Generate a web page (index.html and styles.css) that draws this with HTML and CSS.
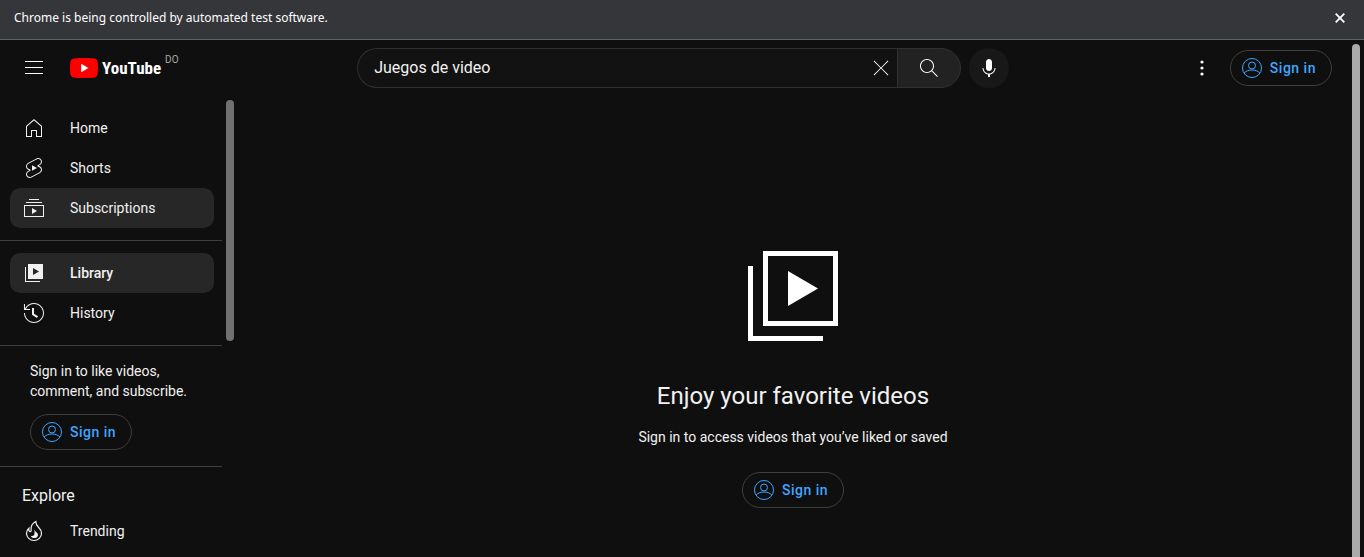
FILE: index.html
```html
<!DOCTYPE html>
<html lang="en">
<head>
<meta charset="utf-8">
<title>Library - YouTube</title>
<link rel="stylesheet" href="styles.css">
</head>
<body>
<svg class="sprite" aria-hidden="true">
  <symbol id="person" viewBox="0 0 24 24"><g fill="none" stroke="currentColor" stroke-width="1"><circle cx="12" cy="12" r="9.5"/><circle cx="12" cy="9.5" r="3.5"/><path d="M4 17.2C5.6 15.2 8.6 14 12 14s6.400 1.200 8 3.200"/></g></symbol>
</svg>
<div class="infobar">
  <span>Chrome is being controlled by automated test software.</span>
  <button class="infobar-close" aria-label="Close"><svg viewBox="0 0 10 10"><path d="M.7.7l8.600 8.600M9.300.7L.7 9.300" fill="none" stroke="currentColor" stroke-width="1.800"/></svg></button>
</div>
<div class="app">
  <div class="page">
    <header class="masthead">
      <div class="start">
        <button class="plain" aria-label="Guide"><svg class="icon" viewBox="0 0 24 24"><path d="M21 6H3V5h18v1zm0 5H3v1h18v-1zm0 6H3v1h18v-1z"/></svg></button>
        <a class="logo" href="#"><svg class="logo-mark" viewBox="0 0 28 20"><path fill="#f00" d="M27.400 3.100A3.500 3.500 0 0 0 24.900.6C22.700 0 14 0 14 0S5.300 0 3.100.6A3.500 3.500 0 0 0 .6 3.100C0 5.300 0 10 0 10s0 4.700.6 6.900a3.500 3.500 0 0 0 2.500 2.500C5.300 20 14 20 14 20s8.700 0 10.900-.6a3.500 3.500 0 0 0 2.500-2.500C28 14.700 28 10 28 10s0-4.700-.6-6.900z"/><path fill="#fff" d="M11.200 14.300V5.700l7.300 4.300z"/></svg><span class="wordmark">YouTube</span><span class="country">DO</span></a>
      </div>
      <form class="center">
        <div class="field">
          <input type="text" aria-label="Search" value="Juegos de video">
          <button type="button" class="plain" aria-label="Clear"><svg class="icon-small" viewBox="0 0 24 24"><path d="m12.710 12 8.150 8.150-.71.71L12 12.710l-8.150 8.150-.71-.71L11.290 12 3.150 3.850l.71-.71L12 11.290l8.150-8.150.71.71z"/></svg></button>
        </div>
        <button type="button" class="search" aria-label="Search"><svg class="icon" viewBox="0 0 24 24"><path d="m20.870 20.170-5.590-5.590C16.350 13.350 17 11.750 17 10c0-3.870-3.130-7-7-7s-7 3.130-7 7 3.130 7 7 7c1.750 0 3.350-.65 4.580-1.710l5.590 5.590.7-.71zM10 16c-3.310 0-6-2.690-6-6s2.690-6 6-6 6 2.690 6 6-2.690 6-6 6z"/></svg></button>
        <button type="button" class="mic" aria-label="Search with your voice"><svg class="icon" viewBox="0 0 24 24"><path d="M12 3c-1.660 0-3 1.370-3 3.070v5.860C9 13.630 10.340 15 12 15s3-1.370 3-3.070V6.070C15 4.370 13.660 3 12 3zm6.500 9h-1c0 3.030-2.470 5.500-5.500 5.500S6.500 15.030 6.500 12h-1c0 3.240 2.390 5.930 5.500 6.410V21h2v-2.590c3.110-.48 5.500-3.170 5.500-6.410z"/></svg></button>
      </form>
      <div class="end">
        <button class="plain" aria-label="Settings"><svg class="icon" viewBox="0 0 24 24"><circle cx="12" cy="6" r="1.600"/><circle cx="12" cy="12" r="1.600"/><circle cx="12" cy="18" r="1.600"/></svg></button>
        <a class="signin" href="#"><svg class="icon"><use href="#person"/></svg>Sign in</a>
      </div>
    </header>
    <div class="columns">
      <div class="guide">
        <nav class="guide-list">
          <section>
            <a class="entry" href="#"><svg class="icon" viewBox="0 0 24 24"><path d="m12 4.440 7 6.090V20h-4v-6H9v6H5v-9.470l7-6.090m0-1.320-8 6.960V21h6v-6h4v6h6V10.080l-8-6.960z"/></svg>Home</a>
            <a class="entry" href="#"><svg class="icon" viewBox="0 0 24 24"><path d="M10 14.650v-5.300L15 12l-5 2.650zm7.770-4.330-1.200-.5L18 9.060c1.840-.96 2.530-3.230 1.560-5.060s-3.240-2.530-5.070-1.560L6 6.940c-1.290.68-2.070 2.040-2 3.490.07 1.420.93 2.670 2.220 3.250.03.01 1.200.5 1.200.5L6 14.930c-1.830.97-2.530 3.240-1.560 5.070.97 1.830 3.240 2.530 5.070 1.560l8.500-4.500c1.290-.68 2.060-2.040 1.990-3.490-.07-1.420-.94-2.680-2.230-3.250zm-.23 5.860-8.500 4.500c-1.340.71-3.010.2-3.720-1.140-.71-1.340-.2-3.010 1.140-3.720l2.040-1.080v-1.210l-.69-.28-1.110-.46c-.99-.41-1.650-1.350-1.700-2.410-.05-1.060.52-2.060 1.460-2.560l8.500-4.500c1.340-.71 3.010-.2 3.720 1.140.71 1.340.2 3.010-1.140 3.720L15.500 9.260v1.210l1.800.74c.99.41 1.650 1.350 1.700 2.410.05 1.060-.52 2.060-1.460 2.560z"/></svg>Shorts</a>
            <a class="entry filled" href="#"><svg class="icon" viewBox="0 0 24 24"><path d="M10 18v-6l5 3-5 3zm7-15H7v1h10V3zm3 3H4v1h16V6zm2 3H2v12h20V9zM3 10h18v10H3V10z"/></svg>Subscriptions</a>
          </section>
          <section>
            <a class="entry filled current" href="#"><svg class="icon" viewBox="0 0 24 24"><path d="M4 20h14v1H3V6h1v14zM21 3v15H6V3h15zm-4 7.500L11 7v7l6-3.500z"/></svg>Library</a>
            <a class="entry" href="#"><svg class="icon" viewBox="0 0 24 24"><path d="M14.970 16.950 10 13.870V7h2v5.760l4.030 2.490-1.060 1.700zM22 12c0 5.510-4.490 10-10 10S2 17.510 2 12h1c0 4.960 4.040 9 9 9s9-4.040 9-9-4.040-9-9-9C8.810 3 5.920 4.640 4.280 7.380c-.11.18-.22.37-.31.56L3.940 8H8v1H1.960V3h1v4.740c.04-.09.07-.17.11-.25.11-.22.23-.42.35-.63C5.220 3.860 8.510 2 12 2c5.510 0 10 4.490 10 10z"/></svg>History</a>
          </section>
          <section class="promo">
            <p>Sign in to like videos, comment, and subscribe.</p>
            <a class="signin" href="#"><svg class="icon"><use href="#person"/></svg>Sign in</a>
          </section>
          <section class="explore">
            <h2>Explore</h2>
            <a class="entry" href="#"><svg class="icon" viewBox="0 0 24 24"><path d="M13.800 2.600C10 4.800 8.600 7.300 9.100 10.800c.2 1.200-.2 1.900-.9 1.900-1 0-1.500-1-1.300-3.500C5.300 10.700 4.500 12.400 4.500 14.200c0 4.200 3.400 7.300 7.500 7.300s7.500-3.100 7.500-7.300c0-2.400-1-4-2.800-5.700-2-1.900-3-3.400-2.900-5.900z" fill="none" stroke="currentColor" stroke-width="1.200"/><path d="M12.600 10c.1 1.700.7 2.400 1.700 3.200 1.300 1.100 2 2 1.600 3.500-.4 1.500-1.900 2.400-3.700 2.400-1.700 0-3-.8-3.500-2.300 1.200.5 2.400.4 3.200-.5 1.100-1.300.3-3.600.7-6.300z"/></svg>Trending</a>
          </section>
        </nav>
        <div class="guide-track"><div class="guide-thumb"></div></div>
      </div>
      <main class="promo-main">
        <svg class="hero" viewBox="0 0 24 24"><path d="M11 7v7l6-3.500zM21 3H6v15h15V3zM7 4h13v13H7V4zM4 6H3v15h15v-1H4V6z"/></svg>
        <h1>Enjoy your favorite videos</h1>
        <p>Sign in to access videos that you’ve liked or saved</p>
        <a class="signin" href="#"><svg class="icon"><use href="#person"/></svg>Sign in</a>
      </main>
    </div>
  </div>
  <div class="page-track"></div>
</div>
</body>
</html>
```
FILE: styles.css
```css
* { box-sizing: border-box; }
body {
  margin: 0;
  height: 100vh;
  display: flex;
  flex-direction: column;
  overflow: hidden;
  background: #0f0f0f;
  color: #f1f1f1;
  font: 14px/20px Roboto, Arial, sans-serif;
}
a { color: inherit; text-decoration: none; }
h1, h2, p { margin: 0; font-weight: 400; }
button { border: 0; padding: 0; background: none; color: #fff; font: inherit; }
svg { display: block; flex: none; fill: currentColor; }
.sprite { position: absolute; width: 0; height: 0; }
.icon { width: 24px; height: 24px; }
.icon-small { width: 20px; height: 20px; }

.infobar {
  flex: none;
  display: flex;
  align-items: center;
  justify-content: space-between;
  padding: 8px 19px 11px 14px;
  border-bottom: 1px solid #5f6063;
  background: #35363a;
  color: #fff;
  font: 12px/20px "Noto Sans", "Open Sans", sans-serif;
}
.infobar-close svg { width: 10px; height: 10px; }

.app { flex: 1; min-height: 0; display: flex; }
.page { flex: 1; min-width: 0; display: flex; flex-direction: column; }
.page-track {
  width: 8px;
  margin: 4px 4px 0 0;
  border-radius: 4px 4px 0 0;
  background: #aaa;
}

.masthead {
  flex: none;
  height: 56px;
  display: flex;
  align-items: center;
  justify-content: space-between;
  padding: 0 20px 0 22px;
}
.start, .end, .center, .logo { display: flex; align-items: center; }
.start { gap: 24px; }
.logo { gap: 4px; color: #fff; }
.logo-mark { width: 28px; height: 20px; }
.wordmark { font: 700 17px/24px "Roboto Condensed", "Liberation Sans Narrow", Roboto, sans-serif; }
.country { align-self: flex-start; font-size: 10px; line-height: 8px; color: #aaa; }

.center { flex: 0 1 652px; margin-right: 2px; }
.field {
  flex: 1;
  height: 40px;
  display: flex;
  align-items: center;
  padding: 0 6px 0 16px;
  border: 1px solid #303030;
  border-right: 0;
  border-radius: 40px 0 0 40px;
  background: #121212;
}
.field input {
  flex: 1;
  min-width: 0;
  padding: 0;
  border: 0;
  outline: 0;
  background: none;
  color: #f1f1f1;
  font: 16px/24px Roboto, sans-serif;
}
.search {
  width: 64px;
  height: 40px;
  display: grid;
  place-items: center;
  border: 1px solid #303030;
  border-radius: 0 40px 40px 0;
  background: #222;
}
.mic {
  width: 40px;
  height: 40px;
  margin-left: 8px;
  display: grid;
  place-items: center;
  border-radius: 50%;
  background: #181818;
}
.end { gap: 16px; }
.signin {
  display: inline-flex;
  align-items: center;
  gap: 6px;
  height: 36px;
  padding: 0 15px 0 9px;
  border: 1px solid #3f3f3f;
  border-radius: 18px;
  color: #3ea6ff;
  font-weight: 500;
  letter-spacing: 0.5px;
}

.columns { flex: 1; min-height: 0; display: flex; }
.guide { flex: none; width: 234px; display: flex; justify-content: space-between; overflow: hidden; }
.guide-list { width: 222px; }
.guide section { padding: 12px 8px 12px 10px; border-bottom: 1px solid #3f3f3f; }
.entry {
  height: 40px;
  display: flex;
  align-items: center;
  gap: 24px;
  padding: 0 12px;
  border-radius: 10px;
}
.filled { background: #272727; }
.current { font-weight: 500; }
.guide .promo { padding: 15px 30px 16px; }
.promo .signin { margin-top: 13px; }
.guide .explore { border: 0; }
.explore h2 { padding: 5px 12px 3px; font-size: 16px; line-height: 24px; }
.guide-track { width: 8px; padding-top: 4px; }
.guide-thumb { height: 241px; border-radius: 4px; background: #717171; }

.promo-main {
  flex: 1;
  display: flex;
  flex-direction: column;
  align-items: center;
  padding-top: 140px;
}
.hero { width: 120px; height: 120px; color: #fff; }
.promo-main h1 { margin-top: 24px; font-size: 24px; line-height: 32px; }
.promo-main p { margin: 15px 0 25px; }
```
